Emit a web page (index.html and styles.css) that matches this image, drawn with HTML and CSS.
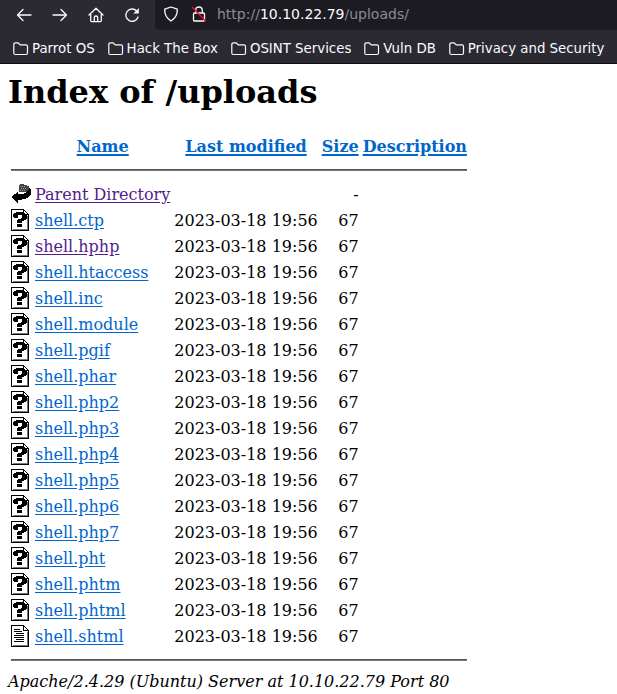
FILE: index.html
```html
<!DOCTYPE html>
<html lang="en">
<head>
<meta charset="utf-8">
<title>Index of /uploads</title>
<link rel="stylesheet" href="styles.css">
</head>
<body>
<svg class="defs" width="0" height="0">
  <symbol id="folder" viewBox="0 0 16 14"><path d="M.8 11V2.500Q.8.8 2.500.8H5.200L7.200 2.900H13Q14.500 2.900 14.500 4.500V11Q14.500 12.500 13 12.500H2.300Q.8 12.500.8 11Z" fill="none" stroke="#fbfbfe" stroke-width="1.200"/></symbol>
  <symbol id="page" viewBox="0 0 20 22"><path fill="#fff" d="M0 0h13l5 5v17H0z"/><path d="M0 0h13v1H1v20h16V6h1v16H0zM12 1h1v4h4v1h-5zM13 1h1v1h-1zM14 2h1v1h-1zM15 3h1v1h-1zM16 4h1v1h-1zM17 5h1v1h-1z"/><path fill="#777" d="M16 7h1v14H2v-1h14z"/></symbol>
  <symbol id="unknown" viewBox="0 0 20 22"><use href="#page"/><path d="M5 3h7v1h2v1h2v5h-1v1h-2v1h-2v2H6v-3h1v-1h3V9h1V6H7v3H3V8H2V5h1V4h2zM6 15h5v3H6z"/></symbol>
  <symbol id="text" viewBox="0 0 20 22"><use href="#page"/><path d="M3 4h6v1H3zM3 6h8v1H3zM5 8h8v1H5zM3 10h10v1H3zM3 12h10v1H3zM5 14h8v1H5zM3 16h10v1H3z"/></symbol>
</svg>
<header class="chrome">
  <div class="toolbar">
    <svg class="tool" viewBox="0 0 16 16"><path d="M15 8H1.500M7 2.500L1.500 8L7 13.500"/></svg>
    <svg class="tool" viewBox="0 0 16 16"><path d="M1 8h13.500M9 2.500L14.500 8L9 13.500"/></svg>
    <svg class="tool" viewBox="0 0 16 16"><path d="M1 8L8 1.300L15 8M2.700 7v6.500Q2.700 14.700 4 14.700H12Q13.300 14.700 13.300 13.500V7M6.300 14.500V10.500Q6.300 9 8 9Q9.700 9 9.700 10.500V14.500"/></svg>
    <svg class="tool" viewBox="0 0 16 16"><path d="M12.800 4.200A6.200 6.200 0 1 0 14 10"/><path class="solid" d="M14.800 1v5.500H9.300z"/></svg>
    <div class="address-bar">
      <svg class="shield" viewBox="0 0 16 16"><path d="M8 1L14.300 3.200Q14.600 10.800 8 15Q1.400 10.800 1.700 3.200Z"/></svg>
      <svg class="lock" viewBox="0 0 16 16"><path d="M4.700 7V4.200Q4.700 1 8 1Q11.300 1 11.300 4.200V7M3.500 7h9q1 0 1 1v6q0 1-1 1h-9q-1 0-1-1V8q0-1 1-1z"/><path class="slash" d="M1.500 1.500L14.500 15"/></svg>
      <span class="url">http://<b>10.10.22.79</b>/uploads/</span>
    </div>
  </div>
  <nav class="bookmarks">
    <span class="bookmark"><svg><use href="#folder"/></svg>Parrot OS</span>
    <span class="bookmark"><svg><use href="#folder"/></svg>Hack The Box</span>
    <span class="bookmark"><svg><use href="#folder"/></svg>OSINT Services</span>
    <span class="bookmark"><svg><use href="#folder"/></svg>Vuln DB</span>
    <span class="bookmark"><svg><use href="#folder"/></svg>Privacy and Security</span>
  </nav>
</header>
<main>
<h1>Index of /uploads</h1>
<table>
<tbody id="listing">
<tr><th class="icon"></th><th><a href="#n">Name</a></th><th><a href="#m">Last modified</a></th><th><a href="#s">Size</a></th><th><a href="#d">Description</a></th></tr>
<tr><th colspan="5"><hr></th></tr>
<tr><td class="icon"><svg viewBox="0 0 20 22" shape-rendering="crispEdges"><path fill="#444" d="M8 2h1V1h4v1h3v1h2v6H8z"/><path fill="#999" d="M9 3h1v1H9zM11 3h1v1h-1zM13 3h1v1h-1zM10 5h1v1h-1zM12 5h1v1h-1zM14 5h1v1h-1zM9 7h1v1H9zM11 7h1v1h-1zM13 7h1v1h-1z"/><path d="M0 14L7 9V11H12L16 9L17.500 7V4L19 5L20 7V11L18 14L14 16L7 17V20H6Z"/></svg></td><td><a class="visited" href="#p">Parent Directory</a></td><td></td><td class="num">-</td><td></td></tr>
</tbody>
<tbody id="footer-rule"><tr><th colspan="5"><hr></th></tr></tbody>
</table>
<address>Apache/2.4.29 (Ubuntu) Server at 10.10.22.79 Port 80</address>
</main>
<script src="listing.js"></script>
</body>
</html>
```
FILE: styles.css
```css
body { margin: 0; background: #fff; color: #000; font: 16px "DejaVu Serif", serif; overflow: hidden; }
.defs { display: block; height: 0; }
.chrome { height: 64px; box-sizing: border-box; background: #2b2a33; border-bottom: 1px solid #0c0c0d; color: #fbfbfe; font-family: "DejaVu Sans", sans-serif; }
.toolbar { display: flex; align-items: flex-start; height: 30px; padding-left: 16px; }
.toolbar svg { width: 16px; height: 16px; fill: none; stroke: #fbfbfe; stroke-width: 1.3; stroke-linecap: round; stroke-linejoin: round; flex: none; }
.tool { margin: 7px 20px 0 0; }
.toolbar .solid { fill: #fbfbfe; stroke: none; }
.toolbar .slash { stroke: #ff0039; }
.address-bar { flex: 1; height: 30px; margin-left: -5px; padding-left: 8px; display: flex; align-items: flex-start; background: #1c1b22; border-bottom-left-radius: 4px; }
.address-bar svg { margin-top: 6px; }
.shield { margin-right: 12px; }
.url { margin-left: 10px; font-size: 14px; line-height: 28px; color: #8b8b92; white-space: nowrap; }
.url b { color: #fbfbfe; font-weight: normal; }
.bookmarks { display: flex; gap: 13px; height: 33px; padding-top: 4px; box-sizing: border-box; align-items: center; padding-left: 13px; font-size: 13.333px; line-height: 17px; white-space: nowrap; }
.bookmark { display: flex; align-items: center; gap: 3px; }
.bookmark svg { width: 16px; height: 14px; }
main { padding: 9px 8px 8px; }
h1 { font-size: 32px; line-height: 38px; margin: 0 0 21px; }
table { border-spacing: 2px; border-collapse: separate; }
td, th { padding: 1px; line-height: 19px; white-space: nowrap; }
.icon { width: 20px; height: 22px; }
.icon svg { display: block; width: 20px; height: 22px; }
.num { text-align: right; }
hr { margin: 8px 0; border: 0 solid; border-width: 1px 0; border-color: #555 #777 #777; height: 0; }
a { color: #0066cc; text-underline-offset: 2px; }
th a { text-decoration-thickness: 2px; }
.visited { color: #551a8b; }
address { line-height: 19px; }
```
FILE: listing.js
```javascript
const files = ["ctp", "hphp", "htaccess", "inc", "module", "pgif", "phar", "php2", "php3", "php4", "php5", "php6", "php7", "pht", "phtm", "phtml", "shtml"];
document.getElementById("listing").insertAdjacentHTML("beforeend", files.map((ext) => {
  const icon = ext === "shtml" ? "text" : "unknown";
  const cls = ext === "hphp" ? ' class="visited"' : "";
  return `<tr><td class="icon"><svg shape-rendering="crispEdges"><use href="#${icon}"/></svg></td><td><a${cls} href="#${ext}">shell.${ext}</a></td><td class="num">2023-03-18 19:56</td><td class="num">67</td><td></td></tr>`;
}).join(""));
```
